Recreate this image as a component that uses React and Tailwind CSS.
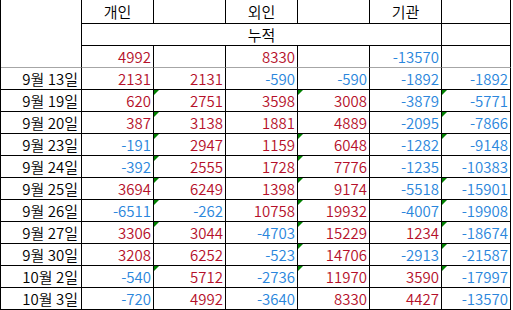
import React from 'react';

const RED = 'text-[#b5102a]';
const BLUE = 'text-[#2a86dc]';

const rows = [
  ['9월 13일', 2131, 2131, -590, -590, -1892, -1892],
  ['9월 19일', 620, 2751, 3598, 3008, -3879, -5771],
  ['9월 20일', 387, 3138, 1881, 4889, -2095, -7866],
  ['9월 23일', -191, 2947, 1159, 6048, -1282, -9148],
  ['9월 24일', -392, 2555, 1728, 7776, -1235, -10383],
  ['9월 25일', 3694, 6249, 1398, 9174, -5518, -15901],
  ['9월 26일', -6511, -262, 10758, 19932, -4007, -19908],
  ['9월 27일', 3306, 3044, -4703, 15229, 1234, -18674],
  ['9월 30일', 3208, 6252, -523, 14706, -2913, -21587],
  ['10월 2일', -540, 5712, -2736, 11970, 3590, -17997],
  ['10월 3일', -720, 4992, -3640, 8330, 4427, -13570],
];

// green error markers (cols 2, 4, 6) per row
const marks = [
  [false, false, false],
  [true, true, true],
  [true, false, true],
  [true, true, true],
  [true, true, false],
  [true, true, true],
  [true, true, true],
  [true, true, true],
  [false, true, true],
  [true, true, true],
  [false, false, false],
];

const Marker = () => (
  <svg className="absolute left-0 top-0" width="5" height="5" viewBox="0 0 5 5">
    <polygon points="0,0 5,0 0,5" fill="#008000" />
  </svg>
);

const Num = ({ value, mark }) => (
  <div className="relative flex items-center justify-end pr-[2px] border-r border-b border-black">
    {mark && <Marker />}
    <span className={value < 0 ? BLUE : RED}>{value}</span>
  </div>
);

export default function App() {
  return (
    <div className="w-[513px] h-[310px] bg-white overflow-hidden">
      <div
        className="grid grid-cols-[81px_72px_72px_72px_72px_72px_69px] grid-rows-[24px_22px_22px_repeat(11,22px)] w-[511px] border-l border-black text-[15px] leading-none font-[350] text-black"
        style={{ fontFamily: '"Noto Sans CJK KR", "Noto Sans", sans-serif' }}
      >
        {/* header */}
        <div className="row-span-3 border-r border-black border-b border-b-[#a6a6a6]" />
        <div className="flex items-center justify-center border-r border-b border-black">개인</div>
        <div className="border-r border-b border-black" />
        <div className="flex items-center justify-center border-r border-b border-black">외인</div>
        <div className="border-r border-b border-black" />
        <div className="flex items-center justify-center border-r border-b border-black">기관</div>
        <div className="border-r border-b border-black" />

        <div className="col-span-5 flex items-center justify-center border-r border-b border-black">누적</div>
        <div className="border-r border-b border-black" />

        <div className={`flex items-center justify-end pr-[2px] border-r border-black border-b border-b-[#a6a6a6] ${RED}`}>4992</div>
        <div className="border-r border-black border-b border-b-[#a6a6a6]" />
        <div className={`flex items-center justify-end pr-[2px] border-r border-black border-b border-b-[#a6a6a6] ${RED}`}>8330</div>
        <div className="border-r border-black border-b border-b-[#a6a6a6]" />
        <div className={`flex items-center justify-end pr-[2px] border-r border-black border-b border-b-[#a6a6a6] ${BLUE}`}>-13570</div>
        <div className="border-r border-black border-b border-b-[#a6a6a6]" />

        {/* data */}
        {rows.map((r, i) => (
          <React.Fragment key={r[0]}>
            <div className="flex items-center justify-end pr-[3px] border-r border-b border-black">{r[0]}</div>
            <Num value={r[1]} />
            <Num value={r[2]} mark={marks[i][0]} />
            <Num value={r[3]} />
            <Num value={r[4]} mark={marks[i][1]} />
            <Num value={r[5]} />
            <Num value={r[6]} mark={marks[i][2]} />
          </React.Fragment>
        ))}
      </div>
    </div>
  );
}
